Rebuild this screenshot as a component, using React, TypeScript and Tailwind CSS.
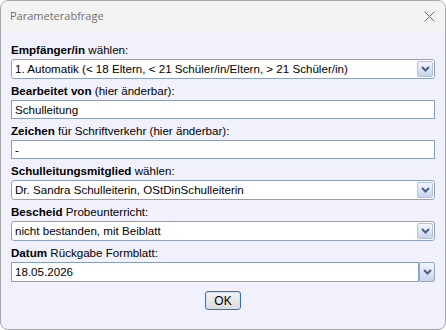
import React from "react";

const font = { fontFamily: '"Liberation Sans", Arial, sans-serif' };

function Chevron() {
  return (
    <svg width="9" height="6" viewBox="0 0 9 6">
      <path d="M1 1 L4.5 4.5 L8 1" fill="none" stroke="#4a5f86" strokeWidth="2" />
    </svg>
  );
}

function Combo({ value }: { value: string }) {
  return (
    <div className="flex h-[20px] items-center rounded-[3px] border border-[#8fa1c0] bg-white pl-[3px] pr-[1px]">
      <span className="flex-1 truncate text-[11.6px] leading-[16px] text-black">{value}</span>
      <div className="flex h-[16px] w-[16px] items-center justify-center rounded-[2px] border border-[#b4c0da] bg-gradient-to-b from-[#f3f6fd] to-[#c7d2ec]">
        <Chevron />
      </div>
    </div>
  );
}

function TextBox({ value }: { value: string }) {
  return (
    <div className="flex h-[19px] items-center border border-[#8a9dbd] bg-white px-[3px]">
      <span className="text-[11.6px] leading-[16px] text-black">{value}</span>
    </div>
  );
}

function Label({ bold, rest }: { bold: string; rest: string }) {
  return (
    <div className="flex h-[18px] items-center text-[11.6px] text-black">
      <span>
        <b>{bold}</b> {rest}
      </span>
    </div>
  );
}

export default function App() {
  return (
    <div className="h-[330px] w-[446px] bg-white" style={font}>
      <div className="flex h-[330px] w-[446px] flex-col overflow-hidden rounded-[8px] border border-[#a8a8a8] bg-[#f1f1fc]">
        <div className="flex h-[30px] shrink-0 items-center justify-between bg-[#f3f3f3] pl-[9px] pr-[10px]">
          <span className="pt-[1px] text-[11px] text-[#707070]" style={{ fontFamily: '"Open Sans", "Liberation Sans", sans-serif' }}>
            Parameterabfrage
          </span>
          <svg width="11" height="11" viewBox="0 0 11 11">
            <path d="M0.5 0.5 L10.5 10.5 M10.5 0.5 L0.5 10.5" stroke="#6a6a6a" strokeWidth="1" />
          </svg>
        </div>
        <div className="flex flex-col pl-[10px] pr-[10px] pt-[10px]">
          <Label bold="Empfänger/in" rest="wählen:" />
          <Combo value="1. Automatik (< 18 Eltern, < 21 Schüler/in/Eltern, > 21 Schüler/in)" />
          <div className="h-[3px]" />
          <Label bold="Bearbeitet von" rest="(hier änderbar):" />
          <TextBox value="Schulleitung" />
          <div className="h-[3px]" />
          <Label bold="Zeichen" rest="für Schriftverkehr (hier änderbar):" />
          <TextBox value="-" />
          <div className="h-[3px]" />
          <Label bold="Schulleitungsmitglied" rest="wählen:" />
          <Combo value="Dr. Sandra Schulleiterin, OStDinSchulleiterin" />
          <div className="h-[3px]" />
          <Label bold="Bescheid" rest="Probeunterricht:" />
          <Combo value="nicht bestanden, mit Beiblatt" />
          <div className="h-[3px]" />
          <Label bold="Datum" rest="Rückgabe Formblatt:" />
          <div className="flex h-[20px]">
            <div className="flex flex-1 items-center border border-[#8a9dbd] bg-white px-[3px]">
              <span className="text-[11.6px] leading-[16px] text-black">18.05.2026</span>
            </div>
            <div className="flex w-[16px] items-center justify-center rounded-[2px] border border-[#97a7c6] bg-gradient-to-b from-[#f3f6fd] to-[#c7d2ec]">
              <Chevron />
            </div>
          </div>
          <div className="flex justify-center pt-[9px]">
            <button className="flex h-[19px] w-[36px] items-center justify-center rounded-[3px] border border-[#3c6fb4] bg-gradient-to-b from-[#f4f4f4] to-[#dcdcdc] text-[12px] text-black shadow-[inset_0_0_0_1px_#cfe3f8]">
              OK
            </button>
          </div>
        </div>
      </div>
    </div>
  );
}
